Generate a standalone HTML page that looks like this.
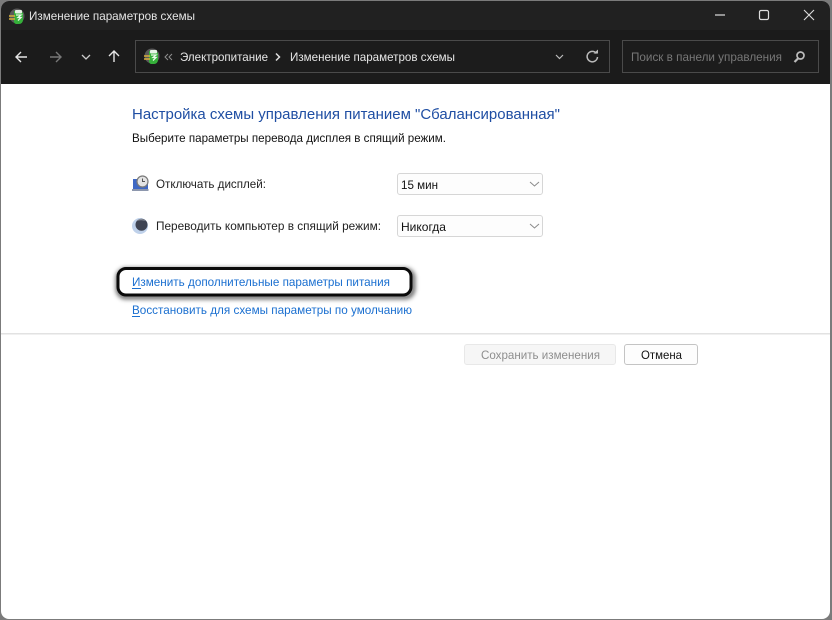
<!DOCTYPE html>
<html lang="ru">
<head>
<meta charset="utf-8">
<title>Изменение параметров схемы</title>
<style>
html,body{margin:0;padding:0;width:832px;height:620px;overflow:hidden;background:#7b7b7b}
svg{display:block;filter:blur(.35px)}
text{font-family:"Liberation Sans","Noto Sans CJK SC",sans-serif;font-size:12px}
</style>
</head>
<body>
<svg width="832" height="620" viewBox="0 0 832 620" xmlns="http://www.w3.org/2000/svg">
<defs>
<filter id="s" x="-10%" y="-60%" width="120%" height="220%"><feGaussianBlur stdDeviation="2.500"/></filter>
<clipPath id="w"><rect x="1" y="1" width="829" height="618" rx="8"/></clipPath>
<g id="bat">
<circle cx="9" cy="8" r="7.500" fill="#5a5a5a"/>
<path d="M6 3h7l2 2v7a4 4 0 0 1-4 4H8a3 3 0 0 1-2-2z" fill="#35b03a"/>
<rect x="7" y="2" width="7" height="3.500" rx="1" fill="#e6f2e6"/>
<path d="M8 7h5l-3 2.500h3l-3 3" stroke="#e8f8e8" stroke-width="1.300" fill="none"/>
<path d="M1 8h6M1 11h6" stroke="#d8b03a" stroke-width="1.500"/>
</g>
</defs>
<g clip-path="url(#w)">
<rect width="832" height="620" fill="#fff"/>
<rect width="832" height="30" fill="#212121"/>
<rect y="30" width="832" height="54" fill="#1b1b1b"/>
</g>

<use href="#bat" x="8" y="8"/>
<text x="29" y="20" fill="#e4e4e4" textLength="166" lengthAdjust="spacingAndGlyphs">Изменение параметров схемы</text>

<!-- window controls -->
<path d="M715 15h10" stroke="#ddd" stroke-width="1.200"/>
<rect x="759.500" y="10.500" width="9" height="9" rx="1.500" fill="none" stroke="#ddd" stroke-width="1.200"/>
<path d="M804 10l10 10M814 10l-10 10" stroke="#ddd" stroke-width="1.100"/>

<!-- nav -->
<path d="M27 57H16M21 52l-5 5 5 5" stroke="#e6e6e6" stroke-width="1.400" fill="none"/>
<path d="M50 57h11M56 52l5 5-5 5" stroke="#777" stroke-width="1.400" fill="none"/>
<path d="M82 55l4 4 4-4" stroke="#ccc" stroke-width="1.300" fill="none"/>
<path d="M114 62V51M109 56l5-5 5 5" stroke="#e6e6e6" stroke-width="1.400" fill="none"/>

<!-- address -->
<rect x="135.500" y="40.500" width="474" height="32" fill="#1c1c1c" stroke="#4a4a4a"/>
<use href="#bat" x="143" y="48"/>
<path d="M168 54l-3 3 3 3M172 54l-3 3 3 3" stroke="#8f8f8f" fill="none"/>
<text x="180" y="61" fill="#e6e6e6" textLength="88" lengthAdjust="spacingAndGlyphs">Электропитание</text>
<path d="M276 53.500l3.500 3.500-3.500 3.500" stroke="#ddd" stroke-width="1.500" fill="none"/>
<text x="290" y="61" fill="#e6e6e6" textLength="165" lengthAdjust="spacingAndGlyphs">Изменение параметров схемы</text>
<path d="M556 55l3.500 3.500 3.500-3.500" stroke="#bbb" stroke-width="1.200" fill="none"/>
<path d="M596.500 53.500a5.200 5.200 0 1 0 1 3.500" stroke="#bbb" stroke-width="1.500" fill="none"/>
<path d="M593.500 53.500h4.500v-4z" fill="#bbb"/>

<!-- search -->
<rect x="622.500" y="40.500" width="196" height="32" fill="#1c1c1c" stroke="#4a4a4a"/>
<text x="631" y="61" fill="#777" textLength="151" lengthAdjust="spacingAndGlyphs">Поиск в панели управления</text>
<circle cx="800.500" cy="55.500" r="3.500" fill="none" stroke="#bbb" stroke-width="1.700"/>
<path d="M798 58.500l-3.500 3.500" stroke="#bbb" stroke-width="2.200"/>

<!-- content -->
<text x="132" y="119" fill="#1f4ea3" style="font-size:15px" textLength="428" lengthAdjust="spacingAndGlyphs">Настройка схемы управления питанием "Сбалансированная"</text>
<text x="132" y="142" fill="#111" textLength="314" lengthAdjust="spacingAndGlyphs">Выберите параметры перевода дисплея в спящий режим.</text>

<!-- display icon -->
<path d="M133 179h15v10h-15z" fill="#3f68c4"/>
<rect x="132" y="189" width="16.500" height="2" fill="#8d97ad"/>
<circle cx="142.500" cy="181.500" r="5.500" fill="#e4e4e4" stroke="#7a7a7a" stroke-width="1.200"/>
<path d="M142.500 178.500v3h2.500" stroke="#555" fill="none"/>
<text x="156" y="188" fill="#222" textLength="110" lengthAdjust="spacingAndGlyphs">Отключать дисплей:</text>

<!-- sleep icon -->
<circle cx="140" cy="226" r="8" fill="#bfd1ea"/>
<circle cx="141.500" cy="224.800" r="6" fill="#3f4452"/>
<path d="M136.500 221a6 6 0 0 1 9 0c-3-1-6-1-9 0z" fill="#8a8f9b"/>
<text x="156" y="230" fill="#222" textLength="225" lengthAdjust="spacingAndGlyphs">Переводить компьютер в спящий режим:</text>

<!-- selects -->
<rect x="397.500" y="173.500" width="145" height="21" rx="2.500" fill="#fdfdfd" stroke="#d6d6d6"/>
<text x="401" y="189" fill="#111" textLength="37" lengthAdjust="spacingAndGlyphs">15 мин</text>
<path d="M530 182l4.500 4 4.500-4" stroke="#8a8a8a" fill="none"/>
<rect x="397.500" y="215.500" width="145" height="21" rx="2.500" fill="#fdfdfd" stroke="#d6d6d6"/>
<text x="401" y="231" fill="#111" textLength="45" lengthAdjust="spacingAndGlyphs">Никогда</text>
<path d="M530 224l4.500 4 4.500-4" stroke="#8a8a8a" fill="none"/>

<!-- highlight -->
<rect x="118" y="270" width="295" height="27" rx="8" fill="none" stroke="#000" stroke-opacity=".7" stroke-width="4" filter="url(#s)"/>
<rect x="118" y="268.500" width="293" height="26.500" rx="8" fill="#fff" stroke="#0a0a0a" stroke-width="3"/>

<!-- links -->
<text x="132" y="286" fill="#1a6fd0" textLength="258" lengthAdjust="spacingAndGlyphs">Изменить дополнительные параметры питания</text>
<path d="M132 288.500h9" stroke="#1a6fd0"/>
<text x="132" y="314" fill="#1a6fd0" textLength="280" lengthAdjust="spacingAndGlyphs">Восстановить для схемы параметры по умолчанию</text>
<path d="M132 316.500h8" stroke="#1a6fd0"/>

<rect x="1" y="333" width="829" height="1.500" fill="#e2e2e2"/>

<!-- buttons -->
<rect x="464.500" y="344.500" width="151" height="20" rx="2.500" fill="#f6f6f6" stroke="#e8e8e8"/>
<text x="481" y="359" fill="#8e8e8e" textLength="119" lengthAdjust="spacingAndGlyphs">Сохранить изменения</text>
<rect x="624.500" y="344.500" width="73" height="20" rx="2.500" fill="#fdfdfd" stroke="#c4c4c4"/>
<text x="641" y="359" fill="#111" textLength="41" lengthAdjust="spacingAndGlyphs">Отмена</text>
</svg>
</body>
</html>
